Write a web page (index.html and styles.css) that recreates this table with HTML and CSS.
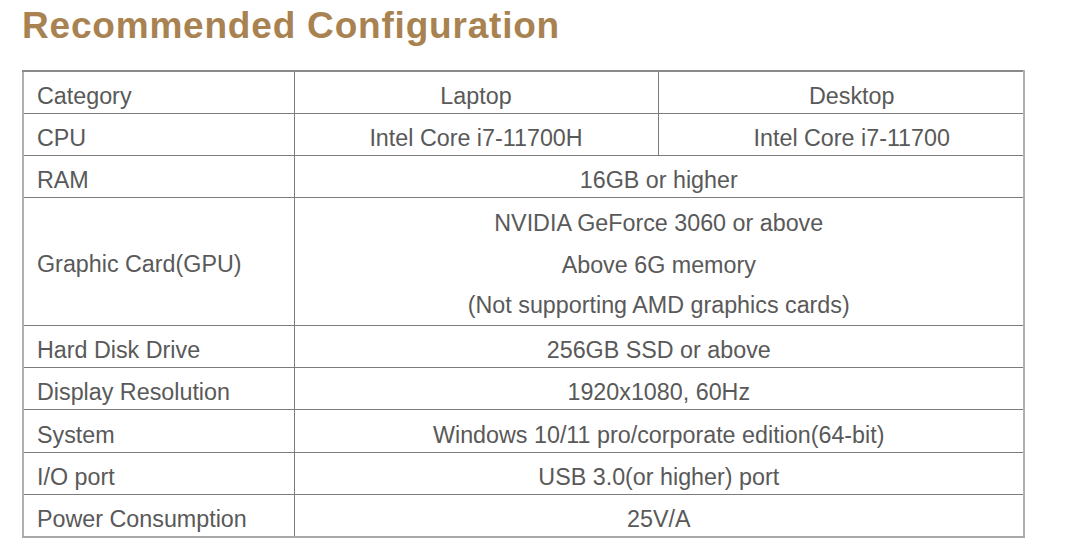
FILE: index.html
```html
<!DOCTYPE html>
<html lang="en">
<head>
<meta charset="utf-8">
<title>Recommended Configuration</title>
<link rel="stylesheet" href="styles.css">
</head>
<body>
<h1 class="title">Recommended Configuration</h1>
<table class="spec">
  <colgroup>
    <col class="c-cat">
    <col class="c-lap">
    <col class="c-desk">
  </colgroup>
  <tr class="row">
    <td class="cat">Category</td>
    <td class="val lap">Laptop</td>
    <td class="val desk">Desktop</td>
  </tr>
  <tr class="row">
    <td class="cat">CPU</td>
    <td class="val lap">Intel Core i7-11700H</td>
    <td class="val desk">Intel Core i7-11700</td>
  </tr>
  <tr class="row">
    <td class="cat">RAM</td>
    <td class="val" colspan="2">16GB or higher</td>
  </tr>
  <tr class="row tall">
    <td class="cat">Graphic Card(GPU)</td>
    <td class="val multi" colspan="2">
      <div class="line">NVIDIA GeForce 3060 or above</div>
      <div class="line">Above 6G memory</div>
      <div class="line last">(Not supporting AMD graphics cards)</div>
    </td>
  </tr>
  <tr class="row">
    <td class="cat">Hard Disk Drive</td>
    <td class="val" colspan="2">256GB SSD or above</td>
  </tr>
  <tr class="row">
    <td class="cat">Display Resolution</td>
    <td class="val" colspan="2">1920x1080, 60Hz</td>
  </tr>
  <tr class="row wide">
    <td class="cat">System</td>
    <td class="val" colspan="2">Windows 10/11 pro/corporate edition(64-bit)</td>
  </tr>
  <tr class="row">
    <td class="cat">I/O port</td>
    <td class="val" colspan="2">USB 3.0(or higher) port</td>
  </tr>
  <tr class="row wide">
    <td class="cat">Power Consumption</td>
    <td class="val" colspan="2">25V/A</td>
  </tr>
</table>
</body>
</html>
```
FILE: styles.css
```css
html, body {
  margin: 0;
  padding: 0;
  background: #ffffff;
}
body {
  padding: 0 0 0 22px;
  font-family: "Liberation Sans", Arial, sans-serif;
  color: #595959;
}
.title {
  margin: 0;
  padding-top: 5px;
  height: 65px;
  font-size: 37px;
  line-height: 42px;
  font-weight: bold;
  letter-spacing: 0.8px;
  color: #a88251;
}
.spec {
  border-collapse: collapse;
  width: 1001px;
  table-layout: fixed;
  font-size: 23.3px;
  border-top: 2px solid #8a8a8a;
  border-bottom: 2px solid #a8a8a8;
  border-left: 2px solid #b0b0b0;
  border-right: 2px solid #b0b0b0;
}
.c-cat { width: 271px; }
.c-lap { width: 364px; }
.c-desk { width: 366px; }
.spec td {
  border: 1px solid #7c7c7c;
  height: 42px;
  padding: 8px 0 0 0;
  box-sizing: border-box;
  line-height: 26px;
  white-space: nowrap;
}
.spec tr.wide td {
  height: 43px;
}
.spec td.cat {
  padding-left: 13px;
  text-align: left;
}
.spec td.val {
  text-align: center;
}
.spec td.desk {
  padding-left: 22px;
}
.spec tr.tall td {
  height: 127px;
  padding-top: 4px;
}
.spec tr.tall td.cat {
  padding-top: 6px;
}
.multi .line {
  height: 42px;
  line-height: 42px;
}
.multi .line.last {
  height: 39px;
  line-height: 39px;
}
```
